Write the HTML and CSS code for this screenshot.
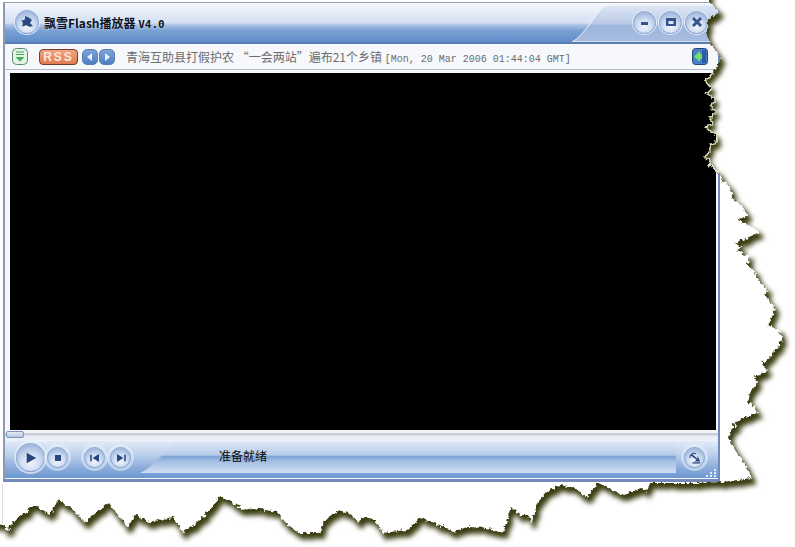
FILE: index.html
```html
<!DOCTYPE html>
<html lang="zh-CN">
<head>
    <meta charset="UTF-8">
    <title>飘雪Flash播放器 V4.0</title>
    <link rel="stylesheet" href="styles.css">
</head>
<body>
    <div class="window">
        <div class="titlebar">
            <svg class="title-tab" width="150" height="38" viewBox="0 0 150 38">
                <defs>
                    <linearGradient id="tabFill" x1="0" y1="0" x2="0" y2="1">
                        <stop offset="0" stop-color="#dfe7f6"/>
                        <stop offset="0.5" stop-color="#b9c9e6"/>
                        <stop offset="0.56" stop-color="#9db4dc"/>
                        <stop offset="1" stop-color="#a9bde2"/>
                    </linearGradient>
                </defs>
                <path d="M4 38C16 32 26 12 34 4Q37 1 42 1H150V38Z" fill="url(#tabFill)" stroke="#f4f7fd" stroke-width="1"/>
            </svg>
            <span class="orb orb-app">
                <svg width="16" height="16" viewBox="0 0 16 16"><path d="M2 6Q5 7 6 5L6 2Q10 3 13 6L11 9L14 12Q10 14 7 11Q5 13 3 12Q5 9 2 6Z" fill="#2c4a80"/></svg>
            </span>
            <span class="app-name">飘雪Flash播放器 <span class="app-version">V4.0</span></span>
            <div class="win-buttons">
                <span class="orb orb-win"><svg width="10" height="10" viewBox="0 0 10 10"><rect x="1" y="5" width="7" height="3" fill="#34548c"/></svg></span>
                <span class="orb orb-win"><svg width="10" height="10" viewBox="0 0 10 10"><path d="M0 1H10V9H0ZM2.500 4V7H7.500V4Z" fill="#34548c" fill-rule="evenodd"/></svg></span>
                <span class="orb orb-win"><svg width="10" height="10" viewBox="0 0 10 10"><path d="M0 2L2 0L5 3L8 0L10 2L7 5L10 8L8 10L5 7L2 10L0 8L3 5Z" fill="#34548c"/></svg></span>
            </div>
        </div>

        <div class="infobar">
            <svg class="menu-icon" width="16" height="17" viewBox="0 0 16 17">
                <rect x=".5" y=".5" width="15" height="16" rx="4" fill="#e3f3e6" stroke="#5c8c78"/>
                <path d="M4 4H12M4 6.500H12" stroke="#48a85c" stroke-width="1.200"/>
                <path d="M3.500 9H12.500L8 13.500Z" fill="#48b050"/>
            </svg>
            <span class="rss">RSS</span>
            <div class="news-nav">
                <span class="nav-btn"><svg width="8" height="10" viewBox="0 0 8 10"><path d="M6 1V9L1 5Z" fill="#eaf1fb"/></svg></span>
                <span class="nav-btn"><svg width="8" height="10" viewBox="0 0 8 10"><path d="M2 1V9L7 5Z" fill="#eaf1fb"/></svg></span>
            </div>
            <span class="news">青海互助县打假护农 “一会两站”遍布21个乡镇 <span class="news-date">[Mon, 20 Mar 2006 01:44:04 GMT]</span></span>
            <svg class="panel-icon" width="16" height="17" viewBox="0 0 16 17">
                <rect x=".5" y=".5" width="15" height="16" rx="3" fill="#4a80c8" stroke="#24467c"/>
                <rect x="10" y="2" width="4" height="13" fill="#2d5aa0"/>
                <path d="M2 8.500L8 3V6H10V11H8V14Z" fill="#6fe060"/>
            </svg>
        </div>

        <div class="screen"></div>

        <div class="seekbar"><span class="seek-knob"></span></div>

        <div class="controls">
            <div class="transport transport-main">
                <span class="orb orb-play"><svg width="12" height="12" viewBox="0 0 14 14"><path d="M2 1L13 7L2 13Z" fill="#27457f"/></svg></span>
                <span class="orb orb-small"><svg width="6" height="6" viewBox="0 0 8 8"><rect width="8" height="8" fill="#27457f"/></svg></span>
            </div>
            <div class="transport">
                <span class="orb orb-small"><svg width="12" height="8" viewBox="0 0 14 10"><path d="M1 1H3V9H1ZM12 0V10L4 5Z" fill="#27457f"/></svg></span>
                <span class="orb orb-small"><svg width="12" height="8" viewBox="0 0 14 10"><path d="M2 0V10L10 5ZM11 1H13V9H11Z" fill="#27457f"/></svg></span>
            </div>
            <div class="status">
                <svg class="status-bg" width="536" height="34" viewBox="0 0 536 34" preserveAspectRatio="none">
                    <defs>
                        <linearGradient id="statusFill" x1="0" y1="0" x2="0" y2="1">
                            <stop offset="0" stop-color="#dbe6f5"/>
                            <stop offset="0.42" stop-color="#b7cce8"/>
                            <stop offset="0.47" stop-color="#7da3d4"/>
                            <stop offset="0.6" stop-color="#9fbce0"/>
                            <stop offset="1" stop-color="#d2dff2"/>
                        </linearGradient>
                    </defs>
                    <path d="M0 32C14 26 26 8 35 2Q36 1 39 1H536V32Z" fill="url(#statusFill)"/>
                </svg>
                <span class="status-text">准备就绪</span>
            </div>
            <span class="orb orb-small orb-shuffle">
                <svg width="14" height="12" viewBox="0 0 16 14"><path d="M2 7A5 5 0 0 1 9 2" fill="none" stroke="#27457f" stroke-width="1.200"/><path d="M4 2L11 8V4L14 11H7L10 9L3 4Z" fill="#27457f"/><rect x="5" y="12" width="9" height="1.500" fill="#27457f"/></svg>
            </span>
            <svg class="grip" width="12" height="10" viewBox="0 0 12 10">
                <path d="M9 1h2v2h-2zM5 4h2v2h-2zM9 4h2v2h-2zM1 7h2v2h-2zM5 7h2v2h-2zM9 7h2v2h-2z" fill="#e4edf9"/>
            </svg>
        </div>
    </div>

    <!-- torn paper edge, lies over the window -->
    <svg class="torn" width="795" height="547" viewBox="0 0 795 547">
        <defs>
            <filter id="tear" filterUnits="userSpaceOnUse" x="-20" y="-20" width="835" height="587" color-interpolation-filters="sRGB">
                <feTurbulence type="fractalNoise" baseFrequency="0.28" numOctaves="2" seed="7" result="noise"/>
                <feDisplacementMap in="SourceAlpha" in2="noise" scale="6" xChannelSelector="R" yChannelSelector="G" result="paper"/>
                <feOffset in="paper" dx="3" dy="5" result="moved"/>
                <feMorphology in="moved" operator="dilate" radius="1" result="wide"/>
                <feGaussianBlur in="wide" stdDeviation="2.500" result="soft"/>
                <feFlood flood-color="#3a3c10"/>
                <feComposite in2="soft" operator="in" result="shadow"/>
                <feFlood flood-color="#ffffff"/>
                <feComposite in2="paper" operator="out" result="outside"/>
                <feComposite in="shadow" in2="paper" operator="out" result="castShadow"/>
                <feMorphology in="paper" operator="dilate" radius="1" result="fat"/>
                <feFlood flood-color="#dcdcc0" x="695" y="73" width="30" height="100"/>
                <feComposite in2="fat" operator="in" result="rimFull"/>
                <feComposite in="rimFull" in2="paper" operator="out" result="rim"/>
                <feMerge>
                    <feMergeNode in="outside"/>
                    <feMergeNode in="castShadow"/>
                    <feMergeNode in="rim"/>
                </feMerge>
            </filter>
        </defs>
        <path filter="url(#tear)" d="M-30 -30L709 -30L709 2L720 12L708 20L707 32L710 43L718 53L720 62L713 72L705 80L704 82L712 88L705 93L715 98L710 108L715 112L709 118L712 123L704 127L715 135L717 142L710 145L708 153L704 157L710 162L708 165L717 172L723 180L733 193L731 197L743 207L748 215L738 220L752 227L760 232L747 238L735 243L742 248L737 250L750 257L747 265L755 272L758 280L768 290L765 295L772 305L775 310L772 317L768 325L778 330L783 338L778 347L770 357L762 363L767 372L755 377L758 382L750 393L748 402L755 408L757 413L743 418L732 425L735 428L737 420L728 437L737 453L745 465L752 478L723 482L695 483L650 483L647 492L642 488L623 495L603 485L598 483L587 498L575 488L560 485L547 492L538 502L532 522L527 515L520 515L512 507L503 533L487 528L467 527L453 532L440 525L420 518L407 530L383 533L375 520L365 517L358 522L348 513L340 510L325 520L320 533L300 533L285 523L277 512L253 508L243 510L233 502L220 497L203 517L183 533L173 517L150 522L135 515L128 527L108 503L85 522L70 507L58 500L50 515L35 505L15 520L8 530L2 525L-30 520Z"/>
        <path class="torn-line" d="M2.500 484V524"/>
    </svg>
</body>
</html>
```

FILE: styles.css
```css
html, body {
    margin: 0;
    padding: 0;
    background: #ffffff;
}

body {
    width: 795px;
    height: 547px;
    overflow: hidden;
    position: relative;
    font-family: "Noto Sans CJK SC", "Liberation Sans", sans-serif;
}

.window {
    margin: 2px 0 0 3px;
    width: 717px;
    height: 480px;
    box-sizing: border-box;
    border: 2px solid #7389bb;
    border-width: 1px 2px 3px 2px;
    border-top-color: #98a2b2;
    border-left-color: #8f9ab0;
    background: #f5f8fd;
    display: flex;
    flex-direction: column;
}

/* title bar */
.titlebar {
    position: relative;
    height: 36px;
    margin-top: 1px;
    padding-bottom: 2px;
    display: flex;
    align-items: center;
    padding-left: 10px;
    background: linear-gradient(#f4f7fd 0, #d3dff2 50%, #a9c3e6 55%, #7ba1d4 70%, #5f8dca 100%);
    border-bottom: 2px solid #5a7cb4;
    flex: none;
}

.title-tab {
    position: absolute;
    right: 0;
    top: 0;
}

.app-name {
    position: relative;
    margin-left: 5px;
    font-size: 12px;
    font-weight: 700;
    color: #0c1424;
    text-shadow: 0 0 2px #dce6f6;
    white-space: nowrap;
}

.app-version {
    font-family: "DejaVu Sans Mono", monospace;
    font-size: 11px;
}

.win-buttons {
    position: relative;
    margin-left: auto;
    margin-right: 10px;
    display: flex;
    gap: 3px;
}

/* round glass buttons */
.orb {
    display: inline-flex;
    align-items: center;
    justify-content: center;
    box-sizing: border-box;
    border-radius: 50%;
    border: 1px solid #8ea6d0;
    background: radial-gradient(circle at 50% 70%, #f0f5fc 0, #d0ddf2 40%, #a3badf 75%, #c4d3ec 100%);
    box-shadow: 0 0 0 1px #e4ecf8;
    flex: none;
}

.orb-app {
    position: relative;
    width: 24px;
    height: 24px;
}

.orb-win {
    width: 23px;
    height: 23px;
}

.orb-play {
    width: 29px;
    height: 29px;
    box-shadow: 0 0 0 2px rgba(232, 240, 250, .7);
}

.orb-small {
    width: 21px;
    height: 21px;
    box-shadow: 0 0 0 3px rgba(232, 240, 250, .55);
}

/* news strip */
.infobar {
    height: 25px;
    display: flex;
    align-items: center;
    padding-left: 7px;
    padding-right: 10px;
    background: #f6f8fc;
    border-bottom: 1px solid #b4bcc8;
    flex: none;
}

.menu-icon {
    flex: none;
}

.rss {
    margin-left: 11px;
    width: 39px;
    height: 16px;
    box-sizing: border-box;
    border: 1px solid #70402c;
    border-radius: 4px;
    background: linear-gradient(#f0a27e, #e27d52);
    color: #fbe8dc;
    font-family: "Liberation Sans", sans-serif;
    font-size: 12px;
    font-weight: 700;
    letter-spacing: 2px;
    line-height: 14px;
    text-align: center;
}

.news-nav {
    margin-left: 4px;
    display: flex;
    gap: 1px;
}

.nav-btn {
    width: 16px;
    height: 16px;
    box-sizing: border-box;
    display: flex;
    align-items: center;
    justify-content: center;
    border-radius: 5px;
    border: 1px solid #5a7eb4;
    background: linear-gradient(#7ea3d8, #4f7fc2);
}

.news {
    margin-left: 11px;
    font-size: 12px;
    color: #6c6c6c;
    white-space: nowrap;
}

.news-date {
    font-family: "Liberation Mono", monospace;
    font-size: 10px;
}

.panel-icon {
    margin-left: auto;
}

/* player */
.screen {
    flex: 1;
    margin: 3px 2px 0 5px;
    background: #000000;
}

.seekbar {
    position: relative;
    height: 11px;
    background: linear-gradient(#f2f4f8 0, #f2f4f8 25%, #b8bcc8 35%, #e8ecf4 55%, #eef2f9 100%);
    flex: none;
}

.seek-knob {
    position: absolute;
    left: 1px;
    top: 1px;
    width: 18px;
    height: 7px;
    box-sizing: border-box;
    border: 1px solid #7f94b8;
    border-radius: 2px;
    background: linear-gradient(#e4ebf6, #b6c8e2);
}

.controls {
    position: relative;
    height: 33px;
    padding: 0 0 4px 11px;
    margin-bottom: 1px;
    display: flex;
    align-items: center;
    background: linear-gradient(#e2ebf8 0, #bed2ec 35%, #8eaedc 70%, #6b97d0 100%);
    flex: none;
}

.transport {
    position: relative;
    display: flex;
    align-items: center;
    gap: 5px;
}

.transport-main {
    gap: 2px;
}

.transport + .transport {
    margin-left: 16px;
}

.status {
    position: absolute;
    left: 135px;
    top: 0;
    width: 536px;
    height: 34px;
    display: flex;
    align-items: center;
}

.status-bg {
    position: absolute;
    left: 0;
    top: 0;
}

.status-text {
    position: relative;
    margin-left: 79px;
    margin-bottom: 5px;
    font-size: 12px;
    color: #0a0a0a;
}

.orb-shuffle {
    position: absolute;
    right: 13px;
    top: 6px;
}

.grip {
    position: absolute;
    right: 1px;
    bottom: 0;
}

.torn {
    position: absolute;
    left: 0;
    top: 0;
}

.torn-line {
    fill: none;
    stroke: #dcdcdc;
    stroke-width: 1;
}
```
